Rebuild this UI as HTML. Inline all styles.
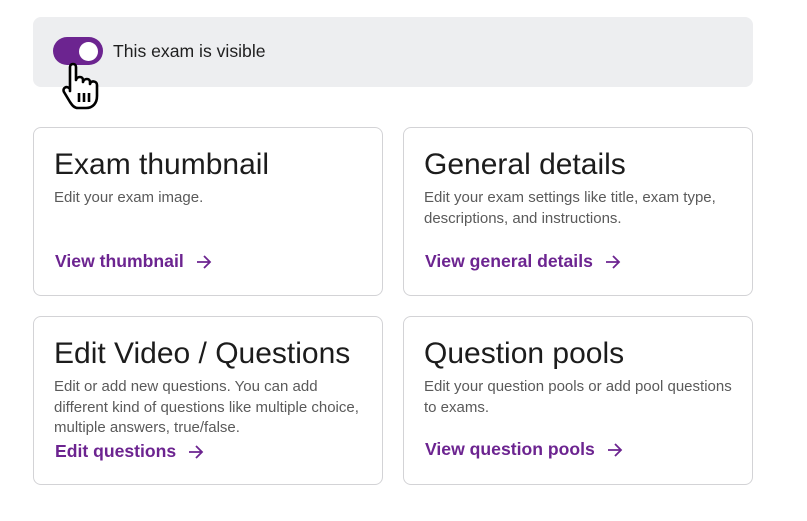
<!DOCTYPE html>
<html><head><style>
*{margin:0;padding:0;box-sizing:border-box}
body{width:807px;height:521px;background:#fff;font-family:"Liberation Sans",Arial,sans-serif;position:relative;overflow:hidden}
.ban{position:absolute;left:33px;top:17px;width:720px;height:70px;background:#edeef0;border-radius:8px}
.tog{position:absolute;left:53px;top:37px;width:50px;height:28px;background:#6c2490;border-radius:14px}
.tog:after{content:"";position:absolute;left:26px;top:5px;width:19px;height:19px;border-radius:50%;background:#fff}
.bt{position:absolute;left:113px;top:41px;font-size:17.6px;color:#1f1f1f;line-height:20px}
.card{position:absolute;width:350px;height:169px;border:1px solid #d3d3d6;border-radius:8px}
.card h2{position:absolute;left:20px;top:19px;font-size:30px;font-weight:normal;color:#1c1c1c;line-height:36px;white-space:nowrap}
.card p{position:absolute;left:20px;top:60px;width:312px;font-size:15px;color:#5a5a5a;line-height:20.5px}
.card a{position:absolute;left:21px;font-size:17.6px;font-weight:bold;color:#6c2490;line-height:20px;text-decoration:none;white-space:nowrap}
.card a svg{margin-left:12px;vertical-align:-2px}
</style></head><body>
<div class="ban"></div>
<div class="tog"></div>
<div class="bt">This exam is visible</div>
<svg style="position:absolute;left:62px;top:62px" width="44" height="48" viewBox="0 0 44 48">
<path d="M8 5 C8 1 14 1 14 5 L14 18 C15 14 21 14 21 18 L21 20 C22 16 28 16 28 20 L28 22 C29 18 35 19 35 23 L35 34 C35 41 31 46 24 46 L16 46 C12 46 10 43 8 40 L2 30 C0 26 5 23 8 27 L8 29 Z" fill="#fff" stroke="#000" stroke-width="2.6" stroke-linejoin="round"/>
<path d="M17 31v9M22 31v9M27 31v9" stroke="#000" stroke-width="2.6"/>
</svg>
<div class="card" style="left:33px;top:127px"><h2>Exam thumbnail</h2><p>Edit your exam image.</p><a style="top:123px">View thumbnail<svg width="16" height="14" viewBox="0 0 16 14"><path d="M1 7h13M8 1l6 6-6 6" fill="none" stroke="#6c2490" stroke-width="1.8"/></svg></a></div>
<div class="card" style="left:403px;top:127px"><h2>General details</h2><p>Edit your exam settings like title, exam type, descriptions, and instructions.</p><a style="top:123px">View general details<svg width="16" height="14" viewBox="0 0 16 14"><path d="M1 7h13M8 1l6 6-6 6" fill="none" stroke="#6c2490" stroke-width="1.8"/></svg></a></div>
<div class="card" style="left:33px;top:316px"><h2>Edit Video / Questions</h2><p>Edit or add new questions. You can add different kind of questions like multiple choice, multiple answers, true/false.</p><a style="top:124px">Edit questions<svg width="16" height="14" viewBox="0 0 16 14"><path d="M1 7h13M8 1l6 6-6 6" fill="none" stroke="#6c2490" stroke-width="1.8"/></svg></a></div>
<div class="card" style="left:403px;top:316px"><h2>Question pools</h2><p>Edit your question pools or add pool questions to exams.</p><a style="top:122px">View question pools<svg width="16" height="14" viewBox="0 0 16 14"><path d="M1 7h13M8 1l6 6-6 6" fill="none" stroke="#6c2490" stroke-width="1.8"/></svg></a></div>
</body></html>
